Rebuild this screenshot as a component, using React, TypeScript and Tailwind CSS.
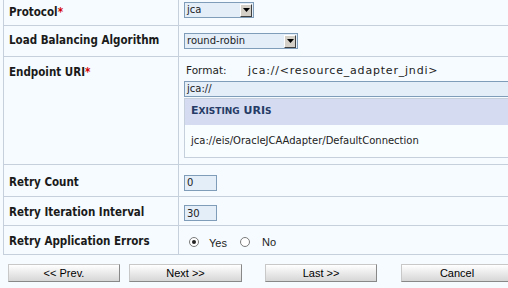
import React from 'react'

const label = "font-['DejaVu_Sans_Condensed','DejaVu_Sans',sans-serif] text-[11.5px] font-bold text-[#1a1a1a]"
const value = "font-['DejaVu_Sans',sans-serif] text-[10px] text-[#222]"

function Req() {
  return <span className="text-[#d40000]">*</span>
}

function Select({ text, width }: { text: string; width: number }) {
  return (
    <div
      className="flex h-[16px] items-center border border-[#7f9db9] bg-[#e3eef9]"
      style={{ width }}
    >
      <span className={`flex-1 pl-[2px] leading-none ${value}`}>{text}</span>
      <span className="mr-[1px] flex h-[13px] w-[12px] items-center justify-center border border-[#404040] border-t-white border-l-white bg-[#d4d0c8]">
        <svg width="7" height="4" viewBox="0 0 7 4">
          <path d="M0 0h7L3.5 4z" fill="#000" />
        </svg>
      </span>
    </div>
  )
}

function Input({ text, className }: { text: string; className: string }) {
  return (
    <div className={`flex h-[16px] items-center border border-[#7f9db9] bg-[#e3eef9] pl-[2px] ${value} ${className}`}>
      {text}
    </div>
  )
}

function Row({
  name,
  required,
  h,
  top,
  low,
  children,
}: {
  name: string
  required?: boolean
  h: string
  top?: boolean
  low?: boolean
  children: React.ReactNode
}) {
  const align = top ? 'items-start pt-[7px]' : low ? 'items-center pt-[4px]' : 'items-center'
  return (
    <div className={`flex border-b border-[#c6d0dc] ${h}`}>
      <div className={`flex w-[175px] shrink-0 border-r border-[#c6d0dc] pl-[5px] ${align}`}>
        <span className={label}>
          {name}
          {required && <Req />}
        </span>
      </div>
      <div className={`flex flex-1 pl-[5px] ${top ? 'flex-col pt-[6px]' : align}`}>{children}</div>
    </div>
  )
}

function Btn({ text, className }: { text: string; className: string }) {
  return (
    <button
      className={`block h-[18px] shrink-0 border border-[#888] border-t-[#c8c8c8] border-l-[#c8c8c8] bg-gradient-to-b from-white to-[#d6d6d6] font-['Liberation_Sans',sans-serif] text-[11px] leading-none text-black ${className}`}
    >
      {text}
    </button>
  )
}

export default function App() {
  return (
    <div className="h-[288px] w-[508px] overflow-hidden bg-[#f5fbfe]">
      <div className="ml-[3px] w-[560px] border-l border-[#c6d0dc]">
        <Row name="Protocol" required h="h-[26px]">
          <div className="-mt-[5px]">
            <Select text="jca" width={70} />
          </div>
        </Row>
        <Row name="Load Balancing Algorithm" h="h-[31px]">
          <Select text="round-robin" width={114} />
        </Row>
        <Row name="Endpoint URI" required h="h-[108px]" top>
          <div className={`flex ${value}`}>
            <span className="w-[64px] pl-[2px] text-[10.5px]">Format:</span>
            <span className="text-[11px] tracking-[0.8px]">jca://&lt;resource_adapter_jndi&gt;</span>
          </div>
          <Input text="jca://" className="mt-[1px] w-[340px]" />
          <div className="mt-[1px] w-[340px] border border-[#c6d0dc]">
            <div className="flex h-[26px] items-center bg-[#d5dcf1] pl-[6px] font-['DejaVu_Sans',sans-serif] text-[11px] font-bold text-[#263b66]">
              E<span className="text-[9px]">XISTING</span>&nbsp;URI<span className="text-[9px]">S</span>
            </div>
            <div className={`flex h-[32px] items-center bg-[#f8fdff] pl-[6px] ${value} text-[10.3px]`}>
              jca://eis/OracleJCAAdapter/DefaultConnection
            </div>
          </div>
        </Row>
        <Row name="Retry Count" h="h-[32px]" low>
          <Input text="0" className="w-[33px]" />
        </Row>
        <Row name="Retry Iteration Interval" h="h-[29px]" low>
          <Input text="30" className="w-[33px]" />
        </Row>
        <Row name="Retry Application Errors" h="h-[29px]" low>
          <div className={`flex items-center pl-[5px] ${value}`}>
            <span className="flex h-[10px] w-[10px] items-center justify-center rounded-full border border-[#7a7a7a] bg-white">
              <span className="h-[4px] w-[4px] rounded-full bg-[#222]" />
            </span>
            <span className="ml-[10px] mt-[3px] font-['Liberation_Sans',sans-serif] text-[11px]">Yes</span>
            <span className="ml-[13px] h-[10px] w-[10px] rounded-full border border-[#7a7a7a] bg-white" />
            <span className="ml-[12px] font-['Liberation_Sans',sans-serif] text-[11px]">No</span>
          </div>
        </Row>
      </div>
      <div className="mt-[9px] flex items-start pl-[8px]">
        <Btn text="<< Prev." className="w-[112px]" />
        <Btn text="Next >>" className="ml-[9px] w-[113px]" />
        <div className="-mt-[5px] ml-[11px] h-[26px] w-px bg-[#c6d0dc]" />
        <Btn text="Last >>" className="ml-[12px] w-[112px]" />
        <div className="-mt-[5px] ml-[12px] h-[26px] w-px bg-[#c6d0dc]" />
        <Btn text="Cancel" className="ml-[12px] w-[112px]" />
      </div>
    </div>
  )
}
